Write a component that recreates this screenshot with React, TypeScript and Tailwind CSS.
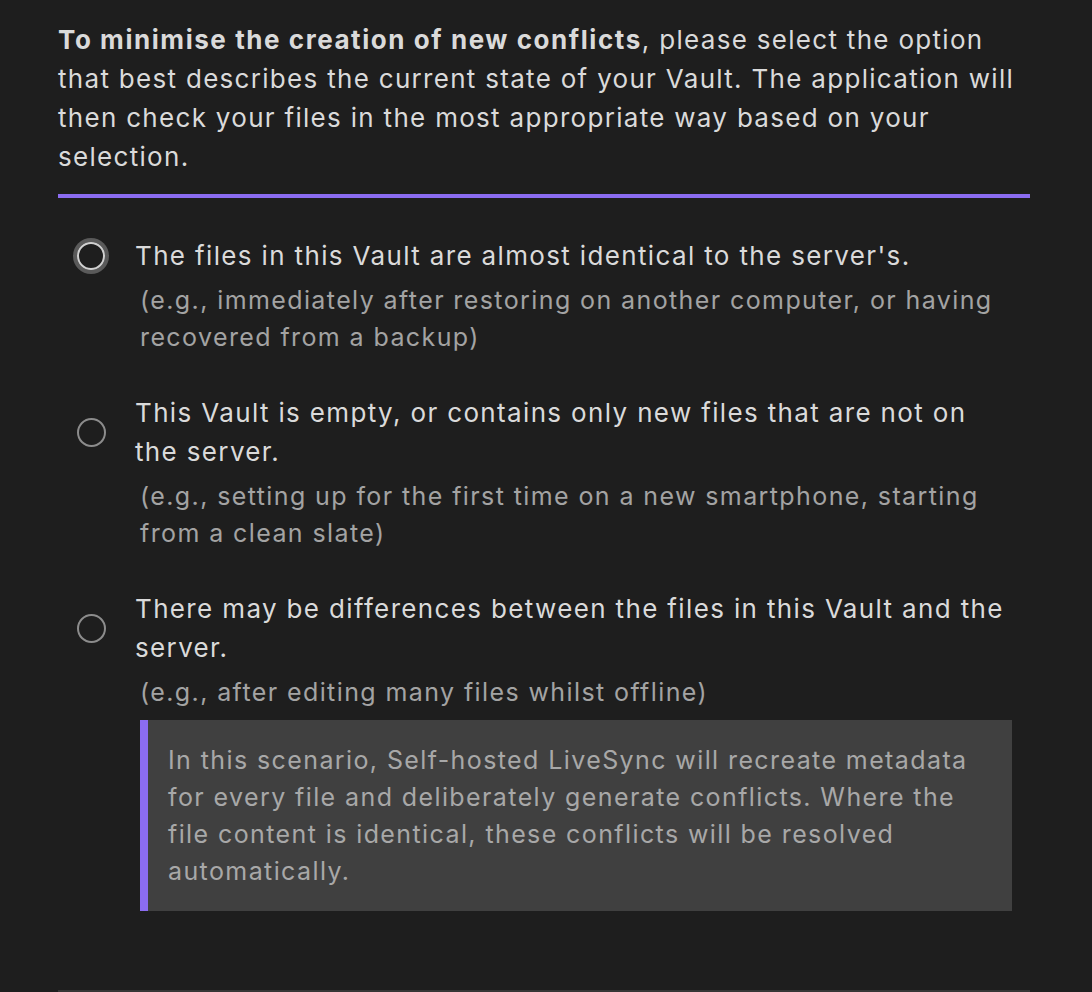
import React from "react";

function Radio({ focused }: { focused?: boolean }) {
  return (
    <div className="w-[30px] shrink-0 flex justify-center ml-[18px] mr-[29px]">
      {focused ? (
        <div className="w-[28px] h-[28px] rounded-full border-[2px] border-[#d0d0d0] shadow-[0_0_0_4px_#5a5a5a]" />
      ) : (
        <div className="w-[29px] h-[29px] rounded-full border-[2px] border-[#8c8c8c]" />
      )}
    </div>
  );
}

function Option({
  label,
  sub,
  focused,
  children,
}: {
  label: string;
  sub: string;
  focused?: boolean;
  children?: React.ReactNode;
}) {
  return (
    <div className="flex flex-col">
      <div className="flex items-center">
        <Radio focused={focused} />
        <div className="w-[872px] text-[26px] leading-[39px] tracking-[0.052em] text-[#dadada]">
          {label}
        </div>
      </div>
      <div className="pl-[82px] mt-[7px] w-[952px] text-[25px] leading-[37px] tracking-[0.056em] text-[#a3a3a3]">
        {sub}
      </div>
      {children}
    </div>
  );
}

export default function App() {
  return (
    <div
      className="min-h-[992px] w-full bg-[#1e1e1e] overflow-hidden"
      style={{ fontFamily: "Inter, 'Noto Sans', sans-serif" }}
    >
      <div className="ml-[58px] w-[972px] pt-[20px]">
        <p className="text-[26px] leading-[39px] tracking-[0.05em] text-[#dadada]">
          <strong className="font-bold tracking-[0.06em]">To minimise the creation of new conflicts</strong>
          , please select the option that best describes the current state of your Vault. The
          application will then check your files in the most appropriate way based on your
          selection.
        </p>
        <div className="mt-[18px] h-[4px] bg-[#8b6cf0]" />
        <div className="mt-[38px] flex flex-col gap-[37px]">
          <Option
            focused
            label="The files in this Vault are almost identical to the server's."
            sub="(e.g., immediately after restoring on another computer, or having recovered from a backup)"
          />
          <Option
            label="This Vault is empty, or contains only new files that are not on the server."
            sub="(e.g., setting up for the first time on a new smartphone, starting from a clean slate)"
          />
          <Option
            label="There may be differences between the files in this Vault and the server."
            sub="(e.g., after editing many files whilst offline)"
          >
            <div className="ml-[82px] mt-[9px] w-[872px] bg-[#404040] border-l-[8px] border-[#8b6cf0] pl-[20px] pr-[24px] pt-[22px] pb-[21px] text-[25px] leading-[37px] tracking-[0.056em] text-[#a8a8a8]">
              In this scenario, Self-hosted LiveSync will recreate metadata for every file and
              deliberately generate conflicts. Where the file content is identical, these conflicts
              will be resolved automatically.
            </div>
          </Option>
        </div>
        <div className="mt-[79px] h-[2px] bg-[#363636]" />
      </div>
    </div>
  );
}
